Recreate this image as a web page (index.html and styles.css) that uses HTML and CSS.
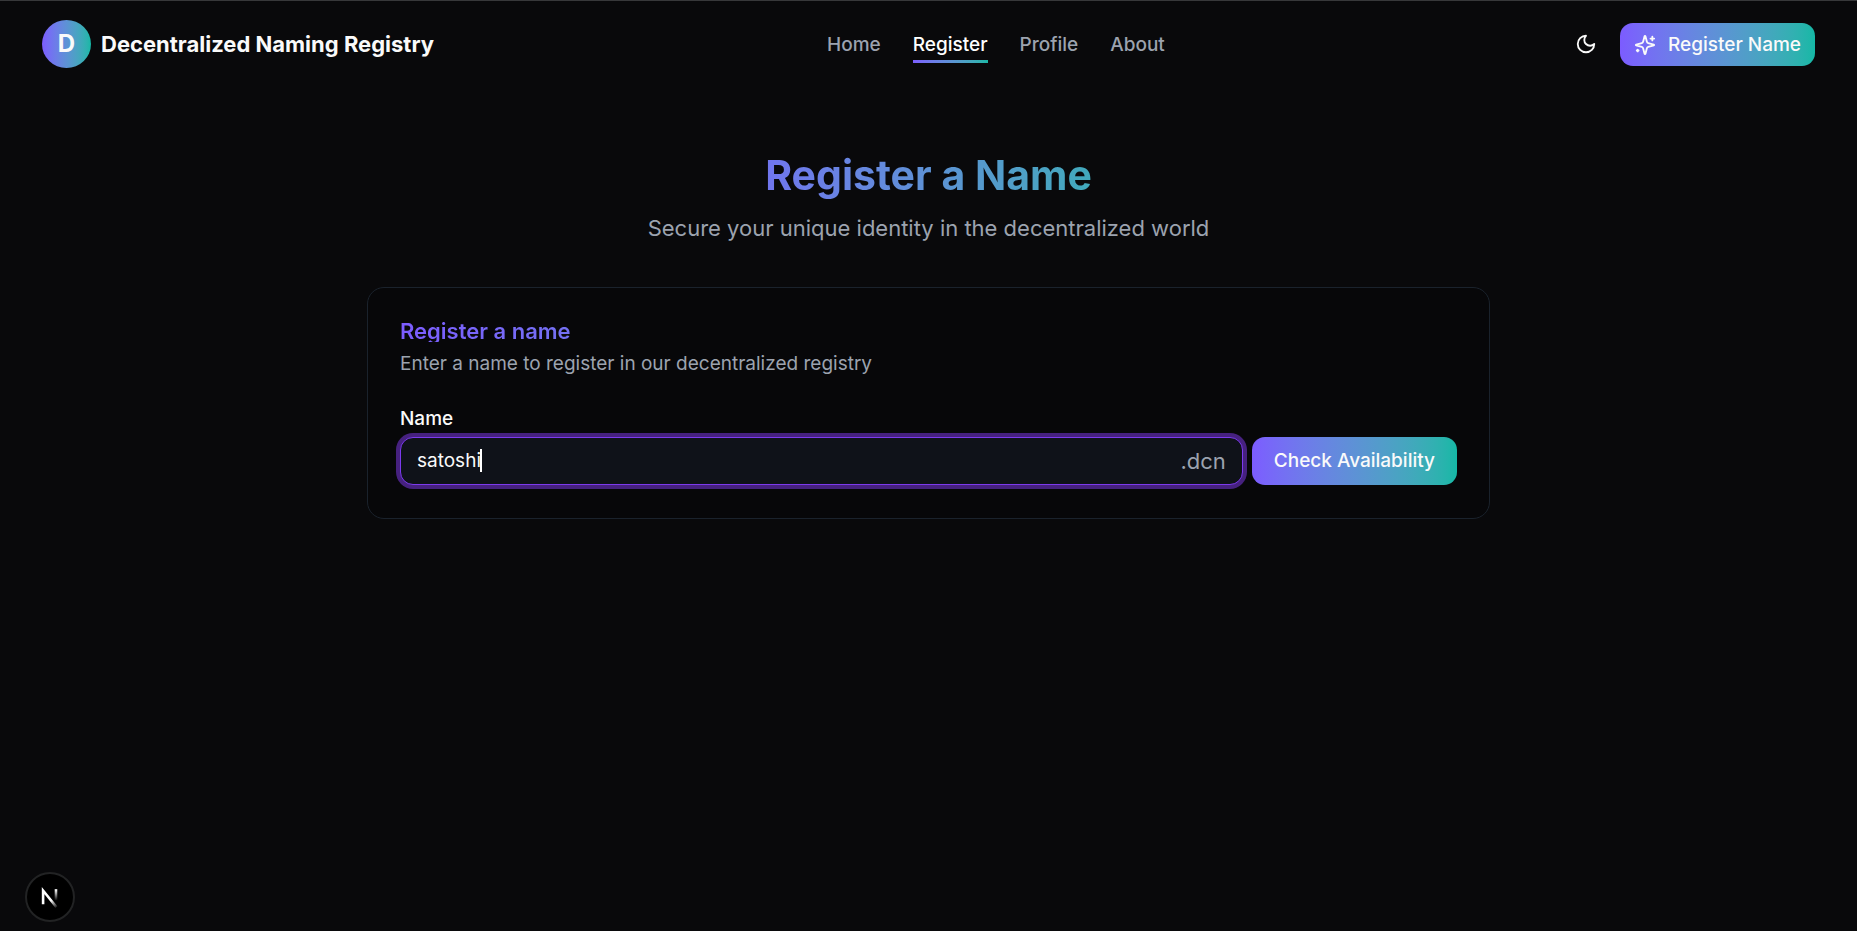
FILE: index.html
```html
<!DOCTYPE html>
<html lang="en">
<head>
<meta charset="utf-8">
<meta name="viewport" content="width=device-width, initial-scale=1">
<title>Decentralized Naming Registry</title>
<link rel="stylesheet" href="styles.css">
</head>
<body>
<header class="header">
  <a class="brand" href="#"><span class="brand-mark">D</span><span class="brand-name">Decentralized Naming Registry</span></a>
  <nav class="nav">
    <a href="#">Home</a>
    <a href="#" class="active" aria-current="page">Register</a>
    <a href="#">Profile</a>
    <a href="#">About</a>
  </nav>
  <div class="actions">
    <button class="theme" type="button" aria-label="Toggle theme">
      <svg viewBox="0 0 24 24"><path d="M12 3a6 6 0 0 0 9 9 9 9 0 1 1-9-9Z"/></svg>
    </button>
    <button class="btn btn-nav" type="button">
      <svg viewBox="0 0 24 24"><path d="M9.937 15.5A2 2 0 0 0 8.5 14.063l-6.135-1.582a.5.5 0 0 1 0-.962L8.5 9.936A2 2 0 0 0 9.937 8.5l1.582-6.135a.5.5 0 0 1 .963 0L14.063 8.5A2 2 0 0 0 15.5 9.937l6.135 1.581a.5.5 0 0 1 0 .964L15.5 14.063a2 2 0 0 0-1.437 1.437l-1.582 6.135a.5.5 0 0 1-.963 0z"/><path d="M20 3v4M22 5h-4M4 17v2M5 18H3"/></svg>
      Register Name
    </button>
  </div>
</header>
<main class="main">
  <div class="intro">
    <h1 class="title">Register a Name</h1>
    <p class="subtitle">Secure your unique identity in the decentralized world</p>
  </div>
  <section class="card">
    <h2 class="card-title">Register a name</h2>
    <p class="card-text">Enter a name to register in our decentralized registry</p>
    <form class="form">
      <label class="label" for="name">Name</label>
      <div class="row">
        <div class="field">
          <input class="input" id="name" type="text" value="satoshi" autocomplete="off" spellcheck="false">
          <span class="caret"></span>
          <span class="suffix">.dcn</span>
        </div>
        <button class="btn btn-check" type="button">Check Availability</button>
      </div>
    </form>
  </section>
</main>
<button class="dev" type="button" aria-label="Open developer tools">
  <svg viewBox="0 0 50 50">
    <defs>
      <linearGradient id="fade-diagonal" gradientUnits="userSpaceOnUse" x1="27" y1="28" x2="34" y2="36"><stop stop-color="#fff"/><stop offset="1" stop-color="#fff" stop-opacity="0"/></linearGradient>
      <linearGradient id="fade-stem" gradientUnits="userSpaceOnUse" x1="0" y1="17" x2="0" y2="29"><stop stop-color="#fff"/><stop offset="1" stop-color="#fff" stop-opacity="0"/></linearGradient>
    </defs>
    <path d="M17.500 33V18L32 36" fill="none" stroke="url(#fade-diagonal)" stroke-width="2.800"/>
    <path d="M31.500 16.500V29" fill="none" stroke="url(#fade-stem)" stroke-width="2.800"/>
  </svg>
</button>
</body>
</html>
```
FILE: styles.css
```css
:root {
  --gradient: linear-gradient(to right in oklab, #7c5cff, #14b8a6);
  --muted: #9ca3af;
}
* { box-sizing: border-box; }
body {
  margin: 0;
  min-height: 100vh;
  background: #09090b;
  color: #fafafa;
  font: 19px/26px Inter, sans-serif;
  border-top: 1px solid #37383a;
}
h1, h2, p { margin: 0; }
button, input { font: inherit; color: inherit; }
a { color: inherit; text-decoration: none; }
svg { fill: none; stroke: currentColor; stroke-width: 2; stroke-linecap: round; stroke-linejoin: round; }
.header {
  display: flex;
  justify-content: space-between;
  align-items: center;
  height: 86px;
  padding: 0 42px;
}
.brand { display: flex; align-items: center; gap: 10px; }
.brand-mark {
  display: grid;
  place-items: center;
  width: 49px;
  height: 48px;
  border-radius: 50%;
  background: var(--gradient);
  font-size: 24px;
  font-weight: 700;
}
.brand-name { font-size: 22px; font-weight: 700; }
.nav { display: flex; gap: 32px; color: var(--muted); font-weight: 500; }
.nav a { padding: 7px 0 2px; border-bottom: 3px solid transparent; }
.nav .active { color: #fff; border-image: var(--gradient) 1; }
.actions { display: flex; align-items: center; gap: 6px; }
.theme { display: grid; place-items: center; width: 56px; height: 40px; padding: 0; border: 0; background: none; }
.theme svg { width: 22px; height: 22px; }
.btn {
  display: flex;
  align-items: center;
  justify-content: center;
  border: 0;
  border-radius: 13px;
  background: var(--gradient);
  font-weight: 500;
  white-space: nowrap;
}
.btn-nav { height: 43px; padding: 1px 14px 0; gap: 12px; }
.btn-nav svg { width: 22px; height: 22px; }
.main { max-width: 1123px; margin: 0 auto; padding: 60px 0; }
.intro { width: fit-content; margin: 0 auto; text-align: center; }
.title {
  background: var(--gradient);
  background-clip: text;
  color: transparent;
  font-size: 41px;
  line-height: 56px;
  font-weight: 700;
}
.subtitle { margin-top: 9px; color: var(--muted); font-size: 22px; line-height: 32px; }
.card {
  margin-top: 43px;
  padding: 32px 32px 33px;
  border: 1px solid #1a222c;
  border-radius: 17px;
  background: #070709;
}
.card-title {
  background: var(--gradient);
  background-clip: text;
  color: transparent;
  font-size: 22px;
  line-height: 22px;
  font-weight: 600;
}
.card-text { margin-top: 9px; color: var(--muted); }
.form { margin-top: 32px; }
.label { display: block; line-height: 20px; font-weight: 500; }
.row { display: flex; gap: 9px; margin-top: 8px; }
.field { position: relative; flex: 1; }
.input {
  display: block;
  width: 100%;
  height: 48px;
  padding: 0 70px 1px 16px;
  border: 1px solid #7c3aed;
  border-radius: 13px;
  outline: 0;
  background: #0f1219;
  box-shadow: 0 0 0 4px #46217f;
}
.caret { position: absolute; left: 80px; top: 12px; width: 2px; height: 23px; background: #fff; }
.suffix { position: absolute; right: 17px; top: 11px; color: var(--muted); font-size: 22px; line-height: 26px; }
.btn-check { height: 48px; padding: 0 22px; }
.dev {
  position: fixed;
  left: 25px;
  bottom: 9px;
  width: 50px;
  height: 50px;
  padding: 0;
  border: 2px solid #222324;
  border-radius: 50%;
  background: #000;
}
.dev svg { display: block; width: 100%; height: 100%; stroke-linecap: butt; stroke-linejoin: miter; }
```
